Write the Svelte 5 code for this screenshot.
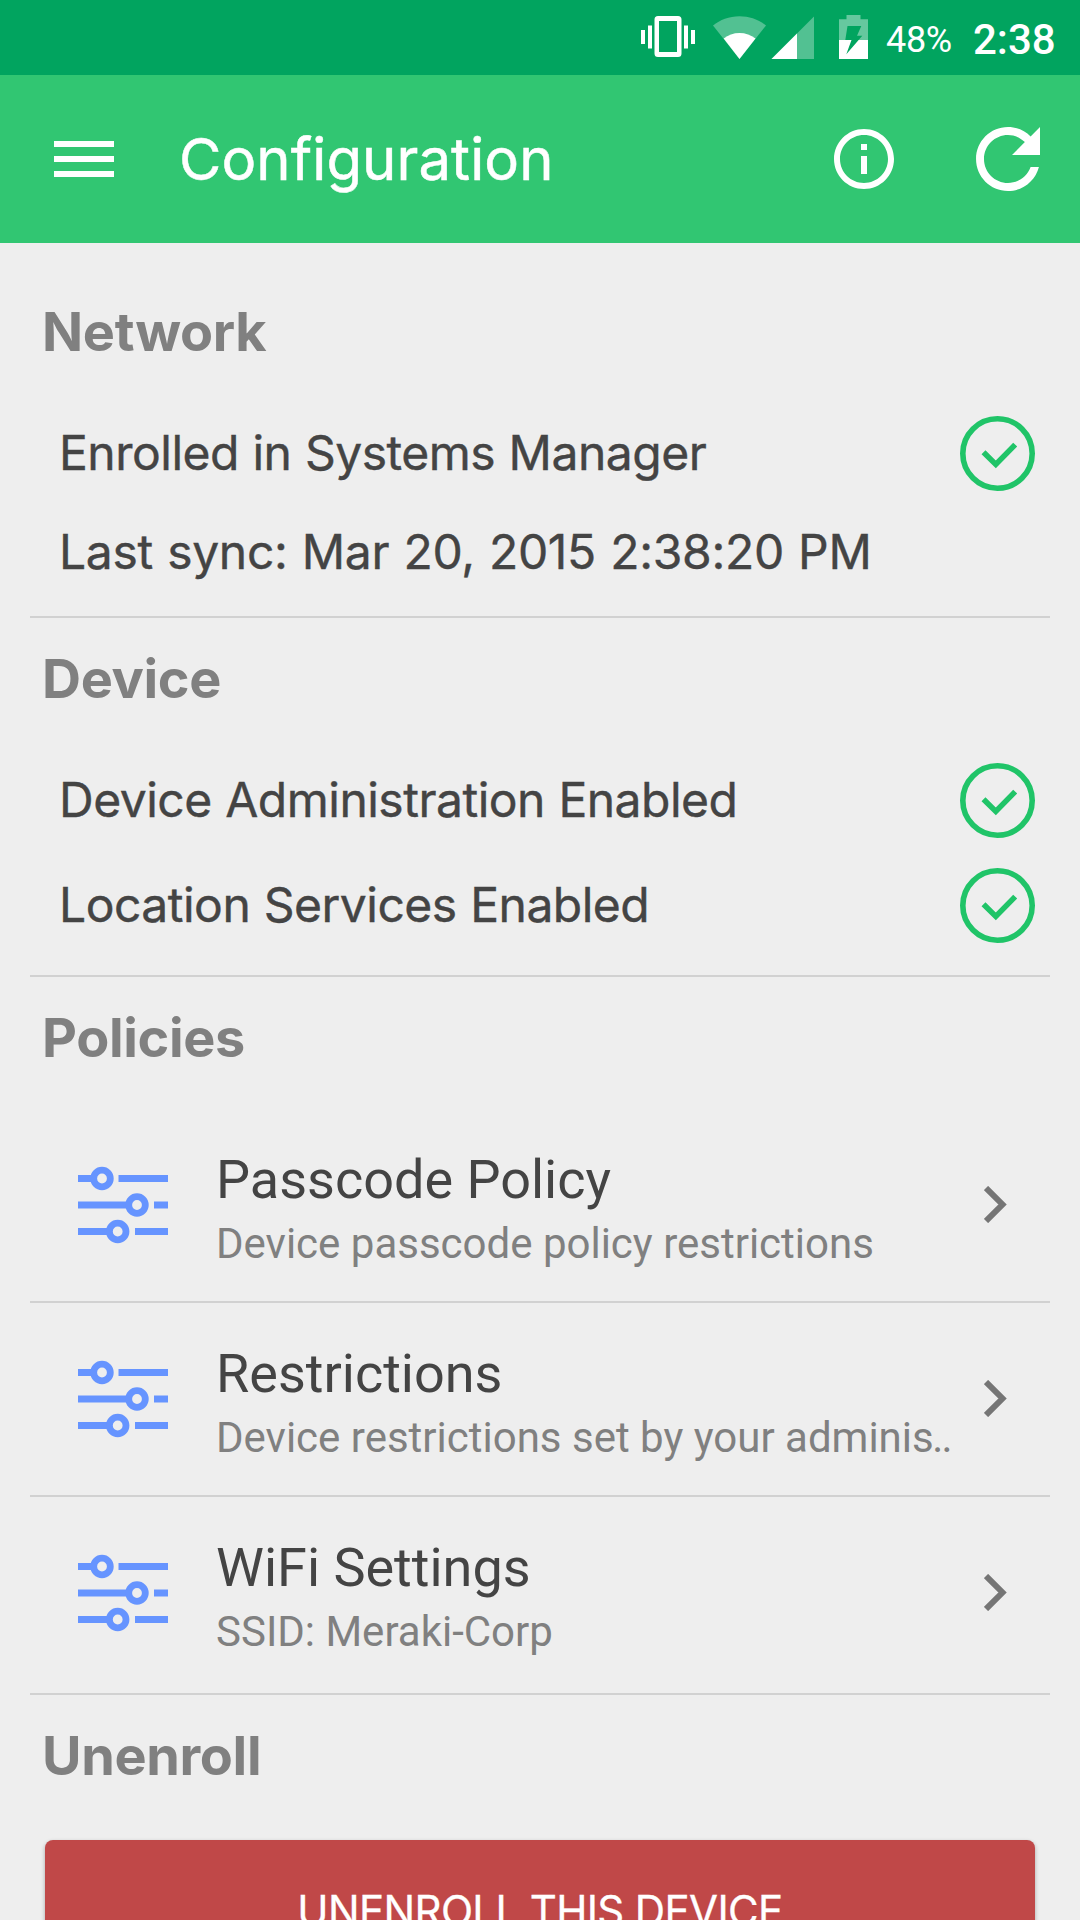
<script lang="ts">
  type StatusRow = {
    label: string;
    ok: boolean;
  };

  const network: StatusRow[] = [
    { label: 'Enrolled in Systems Manager', ok: true },
    { label: 'Last sync: Mar 20, 2015 2:38:20 PM', ok: false }
  ];

  const device: StatusRow[] = [
    { label: 'Device Administration Enabled', ok: true },
    { label: 'Location Services Enabled', ok: true }
  ];

  const policies = [
    { title: 'Passcode Policy', detail: 'Device passcode policy restrictions', clipped: false },
    { title: 'Restrictions', detail: 'Device restrictions set by your adminis', clipped: true },
    { title: 'WiFi Settings', detail: 'SSID: Meraki-Corp', clipped: false }
  ];
</script>

{#snippet statusRow(row: StatusRow)}
  <div class="row">
    <span class="row-label">{row.label}</span>
    {#if row.ok}
      <svg class="check" viewBox="0 0 75 75">
        <circle cx="37.5" cy="37.5" r="34.7" />
        <path d="M23.500 36.200 35.800 48.400 55.200 28.600" />
      </svg>
    {/if}
  </div>
{/snippet}

<div class="screen">
  <div class="status-bar">
    <svg class="status-icons" viewBox="0 0 240 75" fill="#fff">
      <!-- vibrate -->
      <path d="M1 30h4v14H1zM8 25.500h4v23H8zM44 25.500h4v23h-4zM51 30h4v14h-4z" />
      <path fill-rule="evenodd" d="M18 16h20a3.500 3.500 0 0 1 3.500 3.500v34a3.500 3.500 0 0 1-3.500 3.500H18a3.500 3.500 0 0 1-3.500-3.500v-34A3.500 3.500 0 0 1 18 16zM19 21v31h18V21z" />
      <!-- wifi -->
      <path opacity=".32" d="M99.500 59 73 25.500C80 20 89 16.300 99.500 16.300S119 20 126 25.500z" />
      <path d="M99.500 59 83.700 38.500C88 35 93.500 33 99.500 33s11.500 2 16 5.500z" />
      <!-- signal -->
      <path opacity=".32" d="M131.500 59 174 16.500V59z" />
      <path d="M131.500 59 157 33.500V59z" />
      <!-- battery -->
      <path opacity=".4" d="M199 19.300h7.500V15h14v4.300h7.500V40h-29z" />
      <path d="M199 40h29v19h-29z" />
      <path fill="#01a45f" d="M207.500 26h13.800L217 35.700h5.300L206.300 54.300 211.500 40h-6.200z" />
    </svg>
    <span class="battery">48%</span>
    <span class="clock">2:38</span>
  </div>

  <header class="app-bar">
    <svg class="menu" viewBox="0 0 60 36" fill="#fff">
      <path d="M0 0h60v6H0zM0 15h60v6H0zM0 30h60v6H0z" />
    </svg>
    <h1>Configuration</h1>
    <svg class="info" viewBox="0 0 24 24" fill="#fff">
      <path d="M11 17h2v-6h-2v6zm1-15C6.480 2 2 6.480 2 12s4.480 10 10 10 10-4.480 10-10S17.520 2 12 2zm0 18c-4.410 0-8-3.590-8-8s3.590-8 8-8 8 3.590 8 8-3.590 8-8 8zM11 9h2V7h-2v2z" />
    </svg>
    <svg class="refresh" viewBox="0 0 24 24" fill="#fff">
      <path d="M17.650 6.350C16.200 4.900 14.210 4 12 4c-4.420 0-7.990 3.580-7.990 8s3.570 8 7.990 8c3.730 0 6.840-2.550 7.730-6h-2.080c-.820 2.330-3.040 4-5.650 4-3.310 0-6-2.690-6-6s2.690-6 6-6c1.660 0 3.140.690 4.220 1.780L13 11h7V4l-2.350 2.350z" />
    </svg>
  </header>

  <main>
    <section class="network">
      <h2>Network</h2>
      {#each network as row}
        {@render statusRow(row)}
      {/each}
    </section>

    <section class="device">
      <h2>Device</h2>
      {#each device as row}
        {@render statusRow(row)}
      {/each}
    </section>

    <section class="policies">
      <h2>Policies</h2>
      {#each policies as policy}
        <div class="policy">
          <svg class="sliders" viewBox="0 0 90 72">
            <path d="M0 9.500h14M40.500 9.500H90M0 36h48M76 36h14M0 62.500h29M57 62.500h33" />
            <circle cx="24" cy="9.500" r="8.300" />
            <circle cx="59" cy="36" r="8.300" />
            <circle cx="39.700" cy="62.500" r="8.300" />
          </svg>
          <div class="policy-text">
            <div class="policy-title">{policy.title}</div>
            <div class="policy-detail">{policy.detail}{#if policy.clipped}<span class="dots">..</span>{/if}</div>
          </div>
          <svg class="chevron" viewBox="0 0 23 37">
            <path d="M2 2 18.500 18.500 2 35" />
          </svg>
        </div>
      {/each}
    </section>

    <section class="unenroll">
      <h2>Unenroll</h2>
      <button type="button">UNENROLL THIS DEVICE</button>
    </section>
  </main>
</div>

<style>
  :global(body) {
    margin: 0;
    background: #eee;
  }

  .screen {
    width: 1080px;
    height: 1920px;
    overflow: hidden;
    background: #eee;
    font-family: Inter, 'Liberation Sans', sans-serif;
    color: #444;
  }

  .status-bar {
    display: flex;
    align-items: center;
    height: 75px;
    padding-left: 640px;
    background: #01a45f;
    color: #fff;
    font-family: Roboto, sans-serif;
    white-space: nowrap;
  }

  .status-icons {
    width: 240px;
    height: 75px;
    flex: none;
  }

  .battery {
    width: 67px;
    margin-left: 6px;
    padding-top: 5px;
    font-size: 36px;
    letter-spacing: -0.3px;
  }

  .clock {
    margin-left: 20px;
    padding-top: 4px;
    font-size: 42px;
    font-weight: 500;
  }

  .app-bar {
    display: flex;
    align-items: center;
    height: 168px;
    padding: 0 24px 0 54px;
    box-sizing: border-box;
    background: #31c672;
    color: #fff;
  }

  .menu {
    width: 60px;
    height: 36px;
  }

  h1 {
    flex: 1;
    margin: 0 0 0 65px;
    font-size: 58px;
    font-weight: 400;
    letter-spacing: 0.1px;
    -webkit-text-stroke: 0.5px;
  }

  .info {
    width: 72px;
    height: 72px;
    margin-right: 60px;
  }

  .refresh {
    width: 96px;
    height: 96px;
  }

  section {
    margin: 0 30px;
    border-bottom: 2px solid #d1d1d1;
  }

  h2 {
    margin: 0 0 51px 12px;
    font-size: 54px;
    line-height: 66px;
    font-weight: 700;
    letter-spacing: -0.35px;
    color: #808080;
  }

  .network {
    padding: 56px 0 26px;
  }

  .network .row + .row {
    margin-top: 24px;
  }

  .device {
    padding: 28px 0 32px;
  }

  .device .row + .row {
    margin-top: 30px;
  }

  .row {
    display: flex;
    align-items: center;
    justify-content: space-between;
    height: 75px;
    padding: 0 15px 0 29px;
  }

  .row-label {
    padding-bottom: 2px;
    font-size: 48px;
    letter-spacing: -0.5px;
    word-spacing: 0.5px;
    white-space: nowrap;
    -webkit-text-stroke: 0.4px;
  }

  .network .row + .row .row-label {
    letter-spacing: -0.3px;
    word-spacing: 1px;
  }

  .check {
    width: 75px;
    height: 75px;
    fill: none;
    stroke: #20c468;
    stroke-width: 5.6;
  }

  .policies {
    padding: 28px 0 4px;
  }

  .policies h2 {
    margin-bottom: 38px;
  }

  .policy {
    display: flex;
    align-items: center;
    height: 192px;
    padding: 0 43px 0 48px;
    font-family: Roboto, sans-serif;
  }

  .policy + .policy {
    border-top: 2px solid #d1d1d1;
  }

  .sliders {
    width: 90px;
    height: 72px;
    flex: none;
    overflow: visible;
    fill: none;
    stroke: #6694ff;
    stroke-width: 6.8;
  }

  .policy-text {
    flex: 1;
    margin-left: 48px;
    padding-top: 14px;
    white-space: nowrap;
  }

  .policy-title {
    font-size: 54px;
    line-height: 64px;
  }

  .policy-detail {
    font-size: 42px;
    line-height: 64px;
    color: #808080;
  }

  .dots {
    margin-left: -1.5px;
    letter-spacing: -1.8px;
  }

  .chevron {
    width: 23px;
    height: 37px;
    flex: none;
    margin-bottom: 1px;
    fill: none;
    stroke: #757575;
    stroke-width: 6;
  }

  .unenroll {
    padding-top: 28px;
    border-bottom: none;
  }

  button {
    display: block;
    width: 990px;
    height: 144px;
    margin: 0 auto;
    padding: 0 0 4px;
    border: none;
    border-radius: 8px;
    background: #c04848;
    box-shadow: 0 2px 4px rgba(0, 0, 0, 0.3);
    color: #fff;
    font-family: inherit;
    font-size: 42px;
    letter-spacing: -0.65px;
    -webkit-text-stroke: 0.3px;
  }
</style>
